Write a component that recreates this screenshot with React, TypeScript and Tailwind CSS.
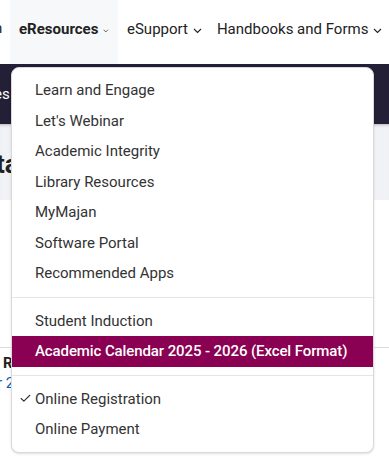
import { Check } from 'lucide-react';

const font = { fontFamily: 'Roboto, "Liberation Sans", sans-serif' };

function Chevron() {
  return (
    <svg width="9" height="6" viewBox="0 0 9 6" className="ml-[5px] mt-[3px]" fill="none">
      <path d="M1 1l3.5 3.5L8 1" stroke="currentColor" strokeWidth="1.1" />
    </svg>
  );
}

type Item = { label: string; active?: boolean; checked?: boolean };

const groups: Item[][] = [
  [
    { label: 'Learn and Engage' },
    { label: "Let's Webinar" },
    { label: 'Academic Integrity' },
    { label: 'Library Resources' },
    { label: 'MyMajan' },
    { label: 'Software Portal' },
    { label: 'Recommended Apps' },
  ],
  [
    { label: 'Student Induction' },
    { label: 'Academic Calendar 2025 - 2026 (Excel Format)', active: true },
  ],
  [
    { label: 'Online Registration', checked: true },
    { label: 'Online Payment' },
  ],
];

// menu item
function MenuItem({ item }: { item: Item }) {
  return (
    <div
      className={`relative h-[30.5px] flex items-center pl-[23px] text-[15px] ${
        item.active ? 'bg-[#8a0052] text-white font-medium tracking-[-0.1px]' : 'text-[#333333]'
      }`}
    >
      {item.checked && <Check className="absolute left-[7px] w-[13px] h-[13px] text-[#333]" strokeWidth={2} />}
      {item.label}
    </div>
  );
}

export default function App() {
  return (
    <div className="relative w-[389px] h-[468px] overflow-hidden bg-white" style={font}>
      {/* top nav */}
      <div className="h-[64px] flex items-stretch text-[15px] text-[#222]">
        <span className="ml-[-6px] self-center mb-[7px] w-[16px] overflow-hidden">n</span>
        <div className="flex items-center bg-[#f7f8fa] pl-[9px] pr-[9px] pb-[6px] w-[108px] font-bold text-[#222]">
          eResources
          <Chevron />
        </div>
        <div className="flex items-center pl-[9px] pb-[6px]">
          eSupport
          <Chevron />
        </div>
        <div className="flex items-center pl-[15px] pb-[6px]">
          Handbooks and Forms
          <Chevron />
        </div>
      </div>

      {/* dark band */}
      <div className="h-[60px] bg-[#231f37] flex items-center">
        <span className="ml-[-6px] text-white text-[15px]">es</span>
      </div>

      {/* page heading area */}
      <div className="h-[76px] bg-[#f1f2f6] shadow-[inset_0_3px_3px_-2px_rgba(0,0,0,0.25)] flex items-start pt-[27px]">
        <span className="ml-[-4px] text-[26px] font-bold text-[#222] leading-none">ta</span>
      </div>

      {/* content below */}
      <div className="mt-[147px] border-t border-[#dcdcdc]">
        <div className="ml-[3px] mt-[5px] text-[15px] leading-[20px] font-bold text-[#222]">R</div>
        <div className="ml-[-3px] text-[15px] leading-[20px] text-[#0a5fb4]">r 2</div>
      </div>

      {/* dropdown menu */}
      <div className="absolute left-[11px] top-[67px] w-[363px] bg-white border border-[#d9d9d9] rounded-[8px] py-[7px] shadow-sm">
        {groups.map((g, i) => (
          <div key={i}>
            {i > 0 && <div className="my-[8px] border-t border-[#e5e5e5]" />}
            {g.map((it) => (
              <MenuItem key={it.label} item={it} />
            ))}
          </div>
        ))}
      </div>
    </div>
  );
}
